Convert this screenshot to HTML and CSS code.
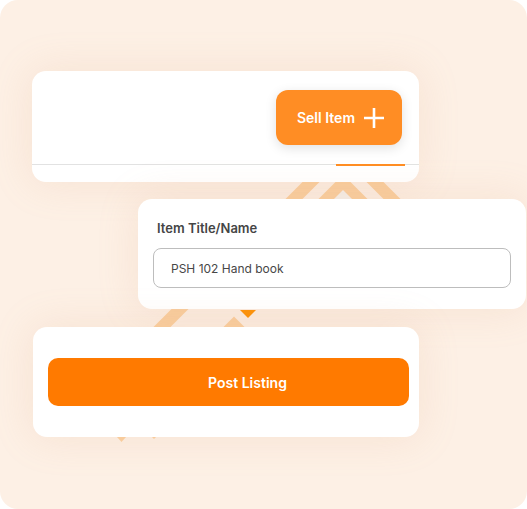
FILE: index.html
```html
<!DOCTYPE html>
<html lang="en">
<head>
  <meta charset="UTF-8" />
  <meta name="viewport" content="width=device-width, initial-scale=1.0"/>
  <title>Sell Item</title>
  <link rel="stylesheet" href="styles.css">
</head>
<body>
  <div class="frame">
    <!-- decorative chevrons behind the cards -->
    <svg class="chevrons" width="527" height="509" viewBox="0 0 527 509">
      <g fill="none" stroke="#fbd0a0" stroke-width="12">
        <polyline points="243,250 343,150 443,250"/>
        <polyline points="263,263 343,183 423,263"/>
        <polyline points="154,405 234,325 314,405"/>
        <line x1="120" y1="369" x2="230" y2="259"/>
      </g>
      <polygon points="334,199 343,190 352,199" fill="#f7f2ed"/>
      <polygon points="240,310 256,310 248,318" fill="#ff9100"/>
      <polygon points="117,437 126,437 121.5,442" fill="#fbd0a0"/>
      <polygon points="152,437 156,437 154,439" fill="#fbd0a0"/>
    </svg>

    <div class="card card-top">
      <div class="card-top-row">
        <button class="btn-sell">
          Sell Item
          <svg width="22" height="22" viewBox="0 0 22 22"><path d="M11 1v20M1 11h20" stroke="#fff" stroke-width="2.6" fill="none"/></svg>
        </button>
      </div>
      <div class="tabs-line"><span class="tab-active"></span></div>
    </div>

    <div class="card card-field">
      <label for="title">Item Title/Name</label>
      <input type="text" id="title" value="PSH 102 Hand book">
    </div>

    <div class="card card-post">
      <button class="btn-post">Post Listing</button>
    </div>
  </div>
</body>
</html>
```

FILE: styles.css
```css
:root {
  --peach: #fdf0e5;
  --orange: #ff7a00;
  --orange-light: #ff8d24;
  --text: #474747;
  --card-shadow: 0 0 40px rgba(214, 160, 120, 0.18);
}

body {
  margin: 0;
  background: #fff;
  font-family: 'Inter', 'Liberation Sans', sans-serif;
  color: var(--text);
}

.frame {
  position: relative;
  width: 527px;
  height: 509px;
  background: var(--peach);
  border-radius: 18px;
  overflow: hidden;
  padding-top: 71px;
  box-sizing: border-box;
}

.chevrons {
  position: absolute;
  left: 0;
  top: 0;
}

.card {
  position: relative;
  background: #fff;
  border-radius: 14px;
  box-shadow: var(--card-shadow);
  box-sizing: border-box;
}

.card-top {
  margin-left: 32px;
  width: 387px;
  height: 111px;
  display: flex;
  flex-direction: column;
}

.card-top-row {
  display: flex;
  justify-content: flex-end;
  padding: 19px 17px 0 0;
  height: 93px;
  box-sizing: border-box;
}

.btn-sell {
  width: 126px;
  height: 55px;
  border: none;
  border-radius: 12px;
  background: var(--orange-light);
  color: #fff;
  font-family: inherit;
  font-size: 14px;
  font-weight: 600;
  display: flex;
  align-items: center;
  justify-content: center;
  gap: 8px;
  box-shadow: 0 3px 12px rgba(0, 0, 0, 0.12);
  padding: 0 0 0 4px;
}

.tabs-line {
  height: 1px;
  background: #e2e2e2;
  display: flex;
  justify-content: flex-end;
  padding-right: 14px;
}

.tab-active {
  width: 69px;
  height: 2px;
  background: var(--orange-light);
}

.card-field {
  margin-top: 17px;
  margin-left: 138px;
  width: 388px;
  height: 110px;
  padding: 21px 15px 0 15px;
}

.card-field label {
  display: block;
  font-size: 13px;
  font-weight: 600;
  color: #454545;
  padding-left: 4px;
  margin-bottom: 12px;
}

.card-field input {
  width: 100%;
  height: 40px;
  box-sizing: border-box;
  border: 1px solid #bdbdbd;
  border-radius: 8px;
  padding: 0 17px;
  font-family: inherit;
  font-size: 12px;
  color: #474747;
  outline: none;
}

.card-post {
  margin-top: 18px;
  margin-left: 33px;
  width: 386px;
  height: 110px;
  padding: 31px 10px 0 15px;
}

.btn-post {
  width: 100%;
  height: 48px;
  border: none;
  border-radius: 10px;
  background: var(--orange);
  color: #fff;
  font-family: inherit;
  font-size: 14px;
  font-weight: 600;
  padding-left: 44px;
}
```
